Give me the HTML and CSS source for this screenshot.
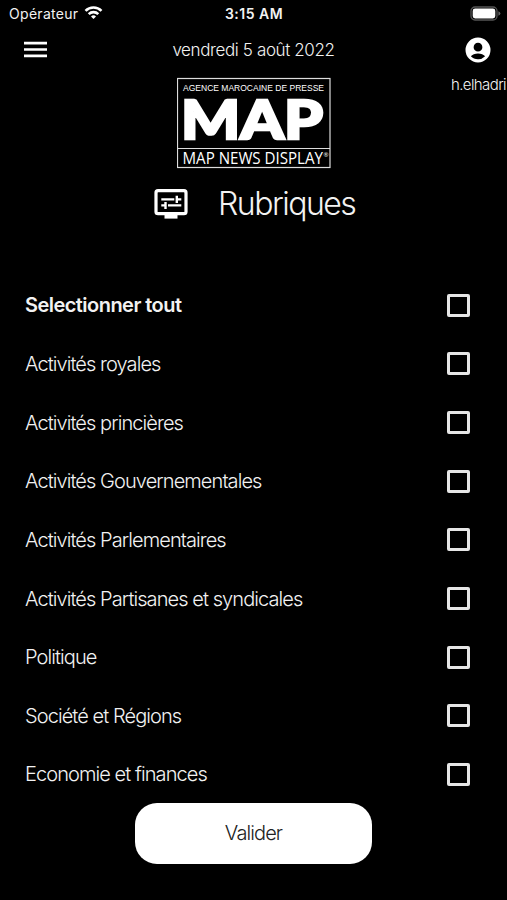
FILE: index.html
```html
<!DOCTYPE html>
<html lang="fr">
  <head>
    <meta charset="UTF-8" />
    <meta name="viewport" content="width=device-width, initial-scale=1.0" />
    <title>MAP News Display - Rubriques</title>
    <link rel="stylesheet" href="styles.css">
  </head>

  <body>
    <div class="statusbar">
      <div class="carrier">
        <span>Opérateur</span>
        <svg width="19" height="15" viewBox="0 0 20 16" fill="none" stroke="#fff" stroke-width="2.8">
          <path d="M1.5 6.2a12 12 0 0 1 17 0" />
          <path d="M4.9 9.7a7.2 7.2 0 0 1 10.2 0" />
          <path d="M10 15l-2.7-2.8a3.8 3.8 0 0 1 5.4 0z" fill="#fff" stroke="none" />
        </svg>
      </div>
      <span class="time">3:15 AM</span>
      <svg class="battery" width="31" height="15" viewBox="0 0 31 15">
        <rect x="1" y="1" width="26" height="13" rx="4" fill="none" stroke="#555" stroke-width="1.3" />
        <rect x="2.7" y="2.6" width="22.6" height="9.8" rx="2.4" fill="#fff" />
        <path d="M28.4 5.2q2 .7 2 2.3t-2 2.3z" fill="#666" />
      </svg>
    </div>

    <header class="topbar">
      <svg class="menu" width="23" height="17" viewBox="0 0 23 17" fill="#fff">
        <path d="M0 .8h23v2.600H0zM0 7.200h23v2.600H0zM0 13.600h23v2.600H0z" />
      </svg>
      <span class="date">vendredi 5 août 2022</span>
      <div class="user">
        <svg width="30" height="30" viewBox="0 0 24 24" fill="#fff">
          <path d="M12 2a10 10 0 1 0 0 20 10 10 0 0 0 0-20zm0 4.200a3.500 3.500 0 1 1 0 7 3.500 3.500 0 0 1 0-7zm0 13.200c-2.300 0-4.300-.9-5.700-2.400.9-1.500 3.500-2.300 5.700-2.300s4.800.8 5.700 2.300a7.800 7.800 0 0 1-5.700 2.400z" />
        </svg>
        <span class="username">h.elhadri</span>
      </div>
    </header>

    <svg class="logo" width="154" height="92" viewBox="0 0 154 92" fill="#fff">
      <rect x=".5" y="1.500" width="152.500" height="89" fill="none" stroke="#ddd" stroke-width="1.200" />
      <path d="M.5 71.500h152.500" stroke="#ddd" stroke-width="1.200" />
      <text class="logo-small" x="6" y="13.800" textLength="141" lengthAdjust="spacingAndGlyphs">AGENCE MAROCAINE DE PRESSE</text>
      <text class="logo-big" x="4" y="62" textLength="142" lengthAdjust="spacingAndGlyphs">MAP</text>
      <text class="logo-name" x="5.500" y="87" textLength="140.500" lengthAdjust="spacingAndGlyphs">MAP NEWS DISPLAY</text>
      <text class="logo-mark" x="146.500" y="80">®</text>
    </svg>

    <div class="heading">
      <svg width="34" height="30" viewBox="0 0 34 30" fill="#fff">
        <rect x="2" y="1.700" width="30" height="23" rx="2" fill="none" stroke="#fff" stroke-width="3.200" />
        <path d="M10.500 25h13v4.600h-13z" />
        <path d="M7.300 9.200h13v2.400h-13zM21.600 6.700h2.400v2.500h3.300v2.400H24v2.500h-2.400zM14 15.200h13.300v2.400H14zM10.300 12.900h2.400V20h-2.400v-2.400h-3v-2.400h3z" />
      </svg>
      <h1>Rubriques</h1>
    </div>

    <form>
      <ul class="list">
        <li class="all"><label>Selectionner tout<input type="checkbox" /></label></li>
        <li><label>Activités royales<input type="checkbox" /></label></li>
        <li><label>Activités princières<input type="checkbox" /></label></li>
        <li><label>Activités Gouvernementales<input type="checkbox" /></label></li>
        <li><label>Activités Parlementaires<input type="checkbox" /></label></li>
        <li><label>Activités Partisanes et syndicales<input type="checkbox" /></label></li>
        <li><label>Politique<input type="checkbox" /></label></li>
        <li><label>Société et Régions<input type="checkbox" /></label></li>
        <li><label>Economie et finances<input type="checkbox" /></label></li>
      </ul>
      <button class="submit" type="button">Valider</button>
    </form>
  </body>
</html>
```
FILE: styles.css
```css
* {
  box-sizing: border-box;
}
body {
  margin: 0;
  height: 900px;
  overflow: hidden;
  background: #000;
  color: #f2f2f2;
  font-family: Inter, "Liberation Sans", sans-serif;
  font-weight: 300;
  display: flex;
  flex-direction: column;
}
.statusbar {
  display: grid;
  grid-template-columns: 1fr auto 1fr;
  align-items: center;
  height: 27px;
  padding: 0 6px 0 9px;
  font-size: 14px;
  font-weight: 400;
}
.carrier {
  display: flex;
  align-items: center;
  gap: 6px;
  letter-spacing: 0.3px;
}
.carrier svg {
  margin-top: -2px;
}
.time {
  margin-left: -2px;
  font-weight: 600;
  letter-spacing: 0.5px;
}
.battery {
  justify-self: end;
  margin-top: -1px;
}
.topbar {
  display: grid;
  grid-template-columns: 1fr auto 1fr;
  height: 50px;
}
.menu {
  margin: 14px 0 0 24px;
}
.date {
  margin-top: 12px;
  font-size: 17px;
  line-height: 22px;
  letter-spacing: -0.38px;
}
.user {
  display: flex;
  flex-direction: column;
  align-items: center;
  justify-self: end;
  width: 58px;
  padding-top: 8px;
}
.username {
  margin-top: 11px;
  padding-left: 1px;
  font-size: 15px;
  line-height: 18px;
  letter-spacing: -0.6px;
  white-space: nowrap;
}
.logo {
  align-self: center;
}
.logo-small {
  font: 9.5px "Liberation Sans", sans-serif;
}
.logo-big {
  font: 900 54px Lato, sans-serif;
  stroke: #fff;
  stroke-width: 2.5px;
}
.logo-name {
  font: 17px "Open Sans", sans-serif;
}
.logo-mark {
  font: 6px "Open Sans", sans-serif;
}
.heading {
  display: flex;
  align-items: center;
  gap: 30px;
  height: 69px;
  padding-left: 154px;
}
h1 {
  margin: 0;
  font-size: 32px;
  font-weight: 300;
  letter-spacing: -1.5px;
}
form {
  display: flex;
  flex-direction: column;
  align-items: center;
}
.list {
  align-self: stretch;
  margin: 38px 0 0;
  padding: 0 37.5px 0 25px;
  list-style: none;
}
label {
  display: flex;
  align-items: center;
  justify-content: space-between;
  height: 58.65px;
  font-size: 20px;
  letter-spacing: -0.92px;
}
.all {
  font-weight: 600;
}
.all label {
  letter-spacing: -0.54px;
}
input {
  appearance: none;
  width: 23px;
  height: 23px;
  margin: 0;
  border: 3px solid #e6e6e6;
  border-radius: 2px;
}
.submit {
  width: 237px;
  height: 61px;
  margin-top: -1px;
  border: none;
  border-radius: 22px;
  background: #fff;
  color: #222;
  font: inherit;
  font-size: 20px;
  letter-spacing: -0.9px;
}
```
